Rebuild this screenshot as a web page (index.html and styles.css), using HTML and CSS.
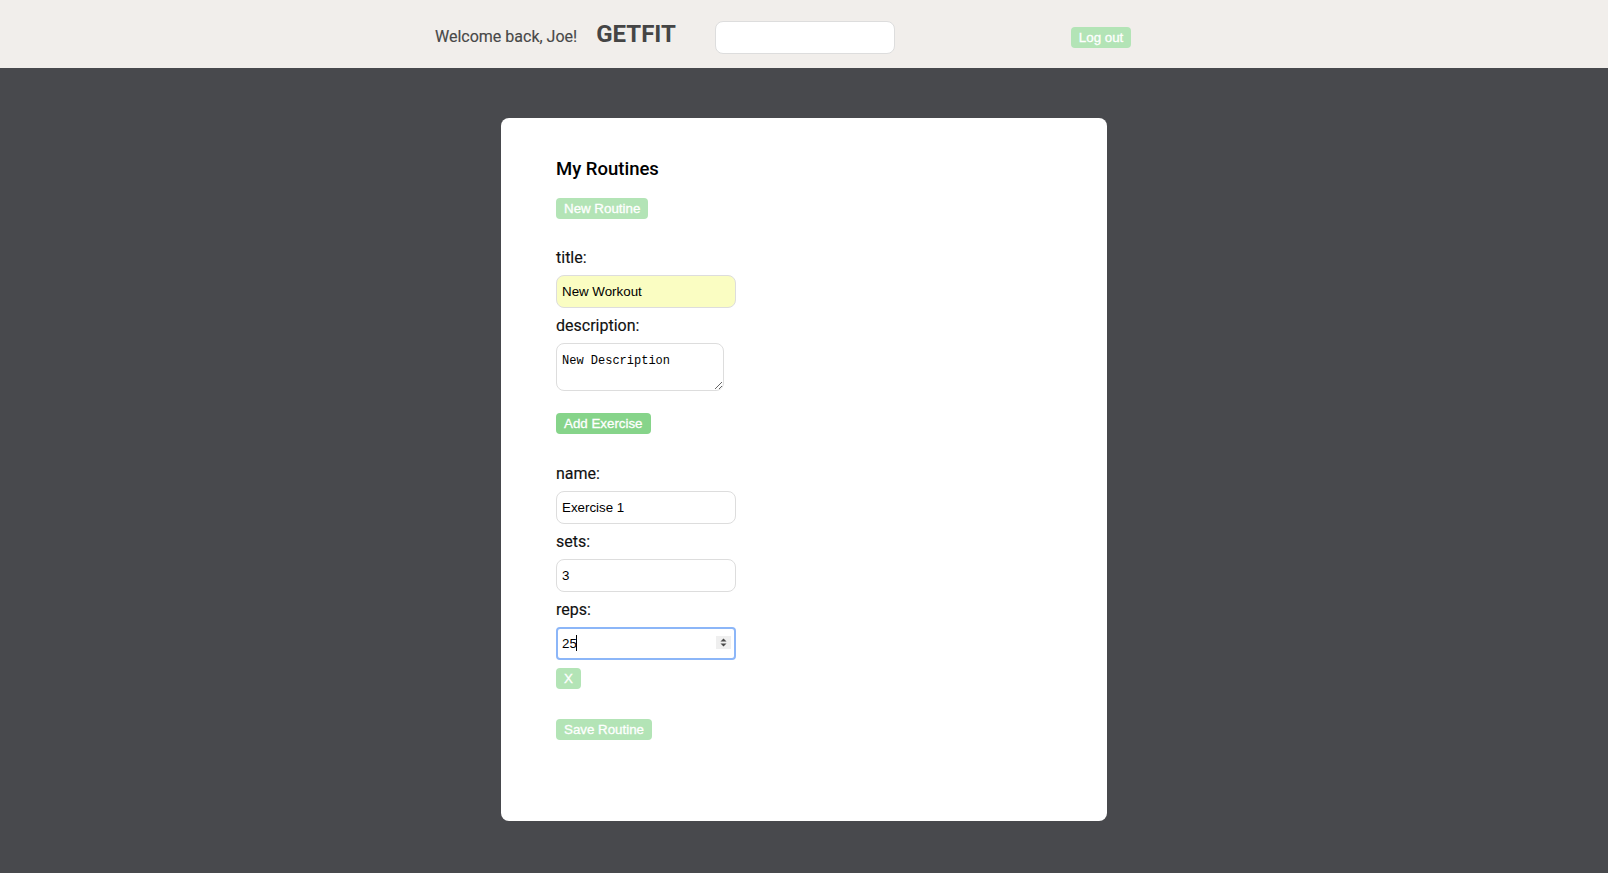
FILE: index.html
```html
<!DOCTYPE html>
<html lang="en">
<head>
<meta charset="utf-8">
<title>GETFIT</title>
<link rel="stylesheet" href="styles.css">
</head>
<body>
<header class="topbar">
  <div class="brand-group">
    <span class="welcome">Welcome back, Joe!</span>
    <span class="brand">GETFIT</span>
  </div>
  <input class="search" type="text" aria-label="search">
  <button class="btn btn-light logout">Log out</button>
</header>
<main class="card">
  <h2 class="card-title">My Routines</h2>
  <button class="btn btn-light">New Routine</button>
  <form class="routine-form">
    <div class="fields">
      <label class="field-label">title:</label>
      <input class="field-input field-filled" type="text" value="New Workout">
      <label class="field-label">description:</label>
      <textarea class="field-textarea">New Description</textarea>
    </div>
    <button type="button" class="btn btn-strong add-btn">Add Exercise</button>
    <div class="fields exercise">
      <label class="field-label">name:</label>
      <input class="field-input" type="text" value="Exercise 1">
      <label class="field-label">sets:</label>
      <input class="field-input" type="text" value="3">
      <label class="field-label">reps:</label>
      <div class="input-wrap">
        <input class="field-input field-focused" type="number" value="25">
        <span class="caret"></span>
        <span class="spinner">
          <svg width="15" height="13" viewBox="0 0 15 13"><rect width="15" height="13" fill="#efefef"/><path d="M4.5 5.5 L7.5 2.5 L10.5 5.5 Z" fill="#4a4a4a"/><path d="M4.5 7.5 L7.5 10.5 L10.5 7.5 Z" fill="#4a4a4a"/></svg>
        </span>
      </div>
    </div>
    <button type="button" class="btn btn-light remove-btn">X</button>
    <button type="button" class="btn btn-light save-btn">Save Routine</button>
  </form>
</main>
</body>
</html>
```

FILE: styles.css
```css
html, body {
  margin: 0;
  padding: 0;
}
body {
  background: #48494d;
  font-family: Roboto, "Liberation Sans", Arial, sans-serif;
  min-height: 873px;
}
.topbar {
  height: 68px;
  background: #f1eeeb;
  display: flex;
  align-items: center;
  padding-left: 435px;
  box-sizing: border-box;
}
.brand-group {
  display: flex;
  align-items: baseline;
  margin-top: -1px;
}
.welcome {
  font-size: 16px;
  color: #484848;
  -webkit-text-stroke: 0.15px #484848;
}
.brand {
  margin-left: 19px;
  font-size: 24px;
  font-weight: 700;
  color: #454545;
}
.search {
  margin-left: 39px;
  margin-top: 6px;
  width: 180px;
  height: 33px;
  box-sizing: border-box;
  border: 1px solid #dddddd;
  border-radius: 8px;
  background: #ffffff;
  outline: none;
}
.btn {
  font-family: "Liberation Sans", Arial, sans-serif;
  font-size: 13.333px;
  line-height: 15px;
  padding: 3px 8px;
  border: none;
  border-radius: 4px;
  color: #ffffff;
  -webkit-text-stroke: 0.3px #ffffff;
  cursor: pointer;
  display: block;
}
.btn-light {
  background: #b3e4b6;
}
.btn-strong {
  background: #86d48a;
}
.logout {
  margin-left: 176px;
  margin-top: 6px;
}
.card {
  width: 606px;
  height: 703px;
  box-sizing: border-box;
  margin: 50px auto 0;
  background: #ffffff;
  border-radius: 8px;
  padding: 40px 55px 0;
}
.card-title {
  margin: 0 0 17px;
  font-size: 18.5px;
  line-height: 23px;
  font-weight: 500;
  color: #000000;
}
.routine-form {
  margin: 29px 0 0;
}
.fields {
  display: flex;
  flex-direction: column;
  align-items: flex-start;
  gap: 8px;
}
.exercise {
  margin-top: 30px;
}
.field-label {
  font-size: 16px;
  line-height: 19px;
  color: #111111;
  -webkit-text-stroke: 0.15px #111111;
}
.field-input {
  width: 180px;
  height: 33px;
  box-sizing: border-box;
  border: 1px solid #dddddd;
  border-radius: 8px;
  padding: 0 5px;
  font-family: "Liberation Sans", Arial, sans-serif;
  font-size: 13.333px;
  color: #000000;
  background: #ffffff;
  outline: none;
  margin: 0;
}
.field-filled {
  background: #fafdc2;
}
.field-focused {
  border: 2px solid #8cb6f8;
  border-radius: 4px;
  padding: 0 4px;
  -moz-appearance: textfield;
}
.field-focused::-webkit-inner-spin-button,
.field-focused::-webkit-outer-spin-button {
  -webkit-appearance: none;
  margin: 0;
}
.field-textarea {
  width: 168px;
  height: 48px;
  box-sizing: border-box;
  border: 1px solid #dddddd;
  border-radius: 8px;
  padding: 10px 5px 4px;
  font-family: "Liberation Mono", monospace;
  font-size: 12px;
  color: #000000;
  margin: 0;
  outline: none;
}
.input-wrap {
  position: relative;
  width: 180px;
  height: 33px;
}
.caret {
  position: absolute;
  left: 20px;
  top: 8px;
  width: 1px;
  height: 16px;
  background: #000000;
}
.spinner {
  position: absolute;
  left: 160px;
  top: 9px;
  width: 15px;
  height: 13px;
  display: block;
}
.spinner svg {
  display: block;
}
.add-btn {
  margin-top: 22px;
}
.remove-btn {
  margin-top: 8px;
}
.save-btn {
  margin-top: 30px;
}
```
